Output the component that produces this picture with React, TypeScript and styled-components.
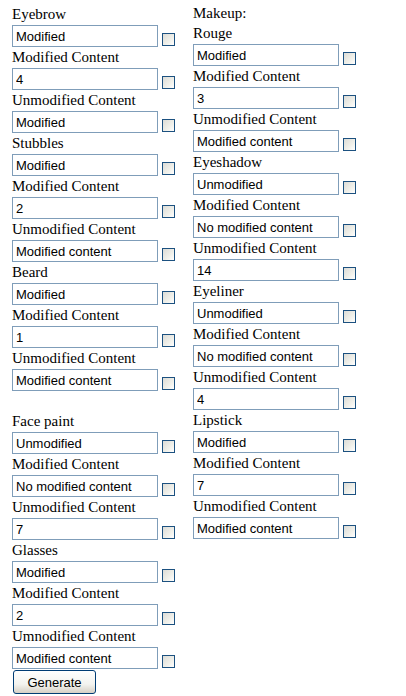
import * as React from "react"
import styled, { createGlobalStyle } from "styled-components"

const Global = createGlobalStyle`
  body {
    margin: 0;
    background: #fff;
    font-family: "Liberation Serif", "Times New Roman", serif;
    color: #000;
  }
`

const Page = styled.div`
  display: flex;
  padding: 4px 0 0 12px;
`

const Column = styled.div<{ $width: number }>`
  display: flex;
  flex-direction: column;
  width: ${({ $width }) => $width}px;
`

const Heading = styled.div`
  height: 19px;
  line-height: 19px;
  font-size: 15px;
`

const Label = styled.div`
  height: 21px;
  line-height: 21px;
  font-size: 15px;
  white-space: nowrap;
`

const Row = styled.div`
  display: flex;
  align-items: flex-end;
  gap: 4px;
  height: 22px;
`

const TextInput = styled.input`
  box-sizing: border-box;
  width: 146px;
  height: 22px;
  margin: 0;
  padding: 0 3px;
  border: 1px solid #7f9db9;
  background: #fff;
  font-family: "Liberation Sans", Arial, sans-serif;
  font-size: 13px;
  color: #000;
  outline: none;
`

const Check = styled.input`
  appearance: none;
  box-sizing: border-box;
  width: 13px;
  height: 13px;
  margin: 0 0 1px 0;
  border: 1px solid #1c5180;
  background: linear-gradient(135deg, #dcdcd7 0%, #f0f0ea 60%, #ffffff 100%);
`

const Spacer = styled.div`
  height: 20px;
`

const Button = styled.button`
  box-sizing: border-box;
  width: 83px;
  height: 24px;
  margin: 1px 0 0 1px;
  padding: 0;
  border: 1px solid #003c74;
  border-radius: 3px;
  background: linear-gradient(180deg, #ffffff 0%, #f3f3ef 60%, #d6d0c5 100%);
  font-family: "Liberation Sans", Arial, sans-serif;
  font-size: 13px;
  color: #000;
`

type Part = { name: string; value: string; mod: string; unmod: string; unmodLabel?: string }

const Field = ({ label, value }: { label: string; value: string }) => (
  <>
    <Label>{label}</Label>
    <Row>
      <TextInput defaultValue={value} />
      <Check type="checkbox" />
    </Row>
  </>
)

const Group = ({ part }: { part: Part }) => (
  <>
    <Field label={part.name} value={part.value} />
    <Field label="Modified Content" value={part.mod} />
    <Field label={part.unmodLabel ?? "Unmodified Content"} value={part.unmod} />
  </>
)

const hair: Part[] = [
  { name: "Eyebrow", value: "Modified", mod: "4", unmod: "Modified" },
  { name: "Stubbles", value: "Modified", mod: "2", unmod: "Modified content" },
  { name: "Beard", value: "Modified", mod: "1", unmod: "Modified content" },
]

const extras: Part[] = [
  { name: "Face paint", value: "Unmodified", mod: "No modified content", unmod: "7" },
  { name: "Glasses", value: "Modified", mod: "2", unmod: "Modified content", unmodLabel: "Umnodified Content" },
]

const makeup: Part[] = [
  { name: "Rouge", value: "Modified", mod: "3", unmod: "Modified content" },
  { name: "Eyeshadow", value: "Unmodified", mod: "No modified content", unmod: "14" },
  { name: "Eyeliner", value: "Unmodified", mod: "No modified content", unmod: "4" },
  { name: "Lipstick", value: "Modified", mod: "7", unmod: "Modified content" },
]

const App: React.FC = () => (
  <>
    <Global />
    <Page>
      <Column $width={181}>
        {hair.map((p) => (
          <Group key={p.name} part={p} />
        ))}
        <Spacer />
        {extras.map((p) => (
          <Group key={p.name} part={p} />
        ))}
        <div>
          <Button type="button">Generate</Button>
        </div>
      </Column>
      <Column $width={181}>
        <Heading>Makeup:</Heading>
        {makeup.map((p) => (
          <Group key={p.name} part={p} />
        ))}
      </Column>
    </Page>
  </>
)

export default App
